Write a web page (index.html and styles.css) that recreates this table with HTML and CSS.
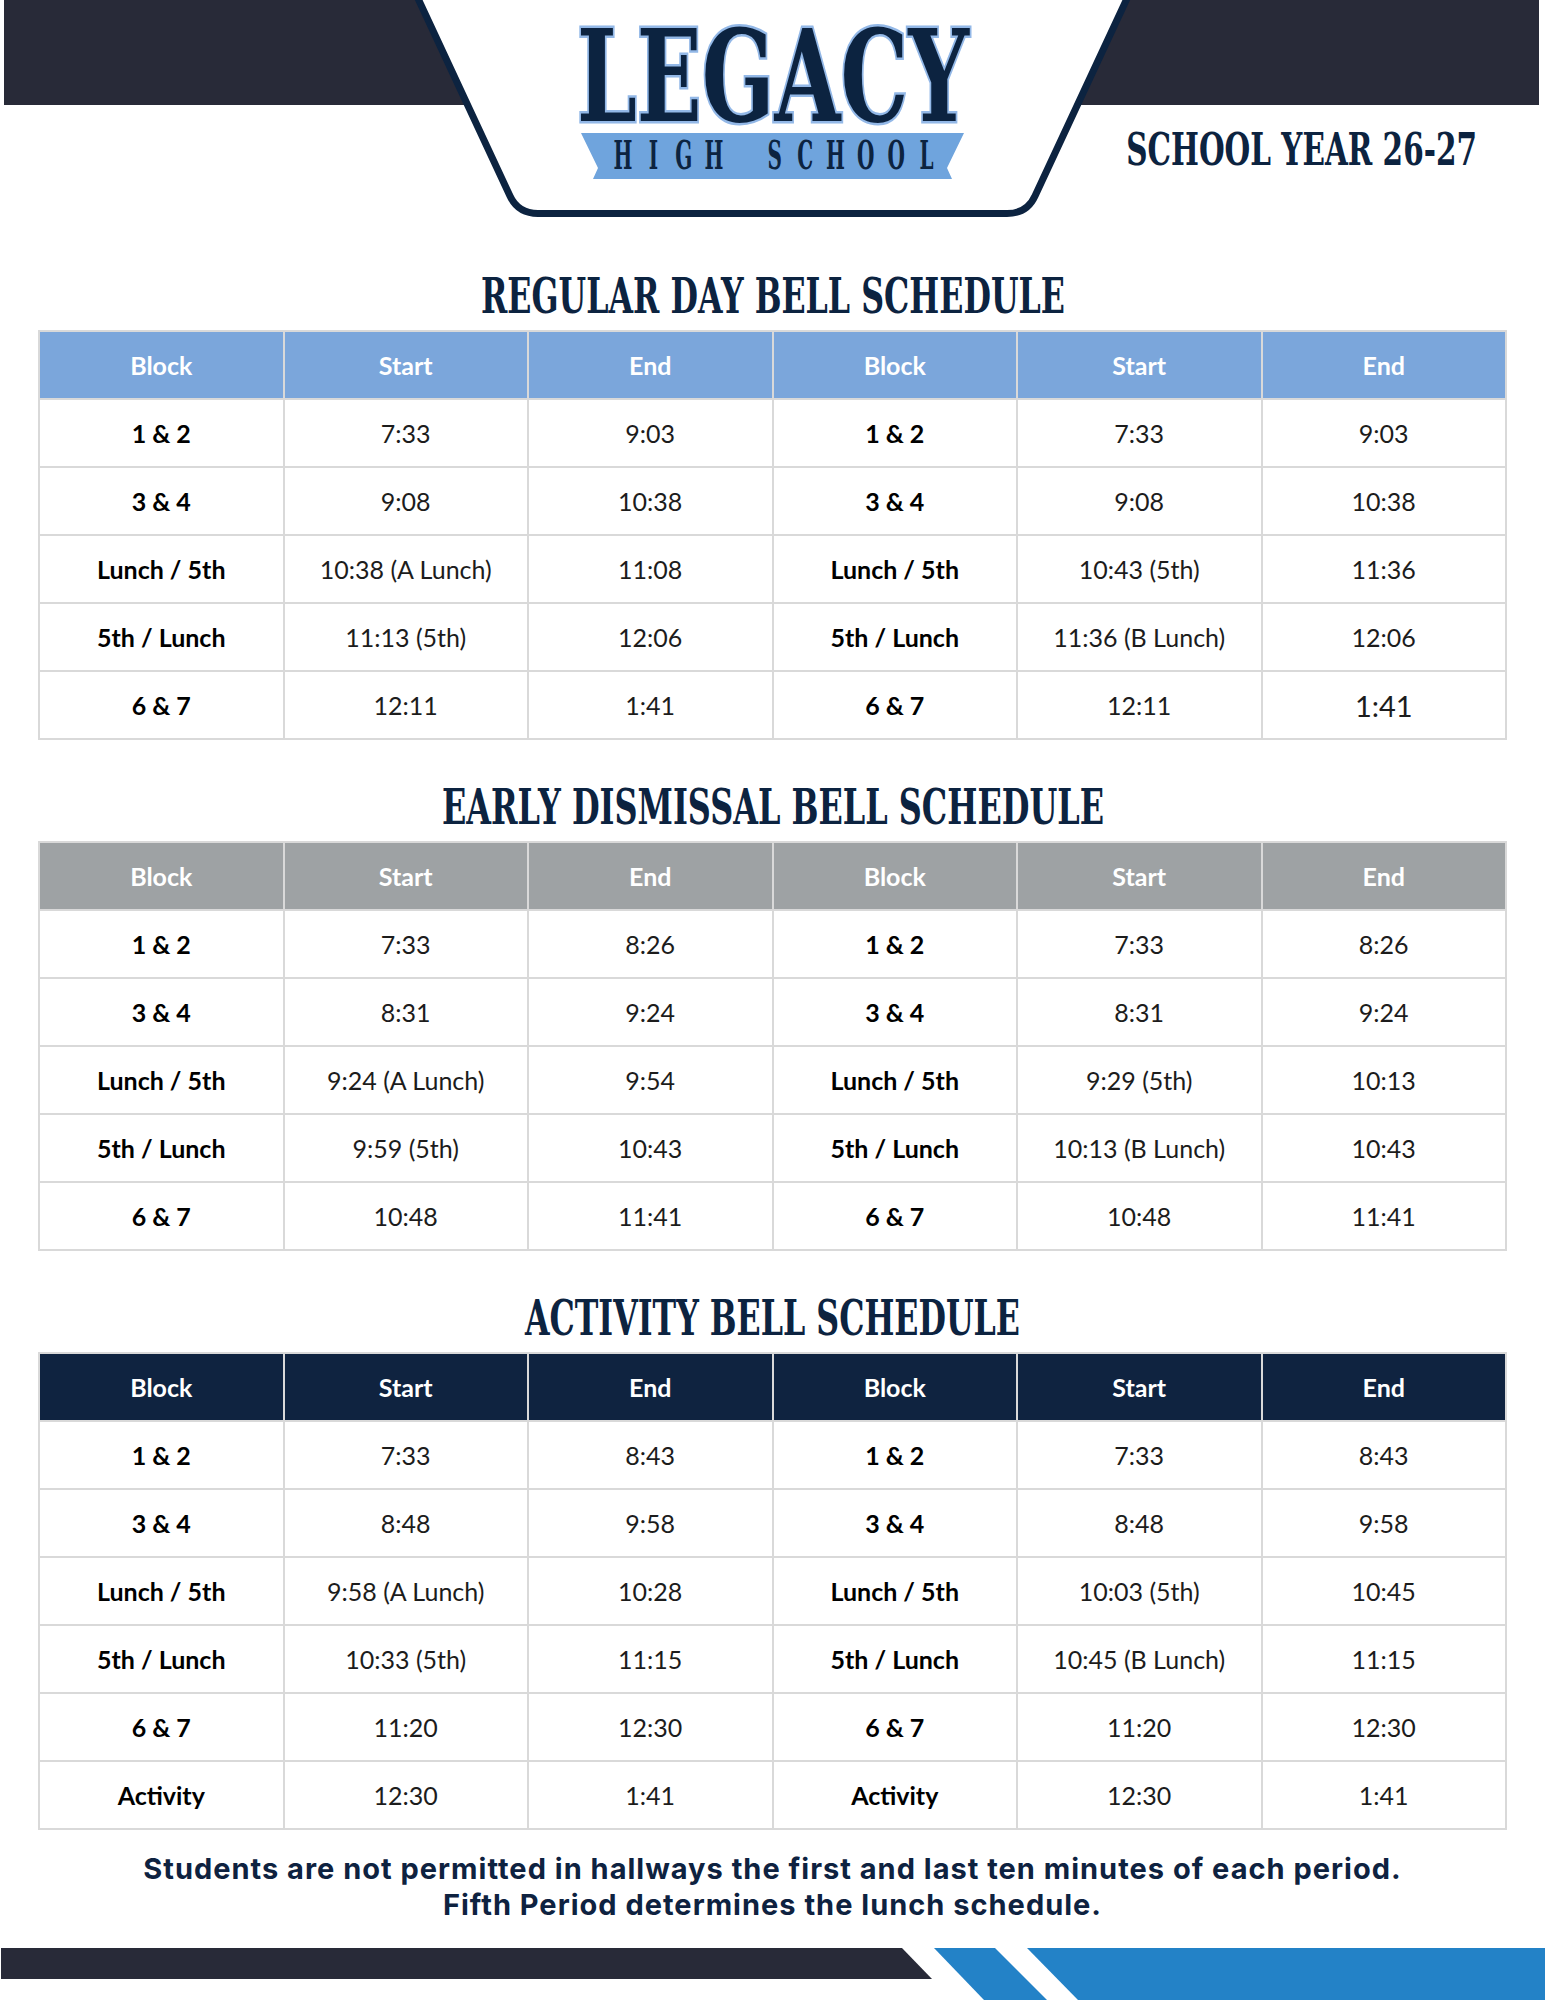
FILE: index.html
```html
<!DOCTYPE html>
<html lang="en">
<head>
<meta charset="utf-8">
<title>Legacy High School – Bell Schedules 26-27</title>
<link rel="stylesheet" href="styles.css">
</head>
<body>
<div class="page">
  <header class="masthead">
    <svg class="masthead-bg" width="1545" height="217" viewBox="0 0 1545 217" aria-hidden="true">
      <rect x="4" y="0" width="1535" height="105" fill="#282a38"/>
      <path d="M415 -8 L510 196 Q518 213.5 538 213.5 L1007 213.5 Q1027 213.5 1035 196 L1130 -8 Z" fill="#ffffff" stroke="#0c2340" stroke-width="7"/>
    </svg>
    <div class="logo">
      <svg class="logo-svg" width="400" height="180" viewBox="0 0 400 180">
        <polygon points="8,133 391,133 374,168 379,179 20,179 25,168" fill="#6fa4dd"/>
        <text class="legacy-text" x="200" y="121" text-anchor="middle" textLength="392" lengthAdjust="spacingAndGlyphs">LEGACY</text>
        <text class="ribbon-text" transform="translate(8 0) scale(0.5 1)" y="169" x="84 144.7 205.4 266.1 326.8 387.5 448.2 508.9 569.6 630.3 691" text-anchor="middle">HIGH SCHOOL</text>
      </svg>
    </div>
    <div class="year">
      <svg class="year-svg" width="352" height="54" viewBox="0 0 352 54">
        <text class="slab" transform="translate(351 42) scale(0.656 1)" x="0" y="0" text-anchor="end">SCHOOL YEAR 26-27</text>
      </svg>
    </div>
  </header>

  <main class="content">
    <section class="schedule schedule--first">
      <h2 class="section-title">
        <svg width="586" height="60" viewBox="0 0 586 60"><text class="slab title-text" x="1" y="46" textLength="584" lengthAdjust="spacingAndGlyphs">REGULAR DAY BELL SCHEDULE</text></svg>
      </h2>
      <table class="sched sched--blue">
        <thead>
          <tr><th>Block</th><th>Start</th><th>End</th><th>Block</th><th>Start</th><th>End</th></tr>
        </thead>
        <tbody>
          <tr><td class="lbl">1 &amp; 2</td><td>7:33</td><td>9:03</td><td class="lbl">1 &amp; 2</td><td>7:33</td><td>9:03</td></tr>
          <tr><td class="lbl">3 &amp; 4</td><td>9:08</td><td>10:38</td><td class="lbl">3 &amp; 4</td><td>9:08</td><td>10:38</td></tr>
          <tr><td class="lbl">Lunch / 5th</td><td>10:38 (A Lunch)</td><td>11:08</td><td class="lbl">Lunch / 5th</td><td>10:43 (5th)</td><td>11:36</td></tr>
          <tr><td class="lbl">5th / Lunch</td><td>11:13 (5th)</td><td>12:06</td><td class="lbl">5th / Lunch</td><td>11:36 (B Lunch)</td><td>12:06</td></tr>
          <tr><td class="lbl">6 &amp; 7</td><td>12:11</td><td>1:41</td><td class="lbl">6 &amp; 7</td><td>12:11</td><td class="big">1:41</td></tr>
        </tbody>
      </table>
    </section>

    <section class="schedule">
      <h2 class="section-title">
        <svg width="664" height="60" viewBox="0 0 664 60"><text class="slab title-text" x="1" y="46" textLength="662" lengthAdjust="spacingAndGlyphs">EARLY DISMISSAL BELL SCHEDULE</text></svg>
      </h2>
      <table class="sched sched--gray">
        <thead>
          <tr><th>Block</th><th>Start</th><th>End</th><th>Block</th><th>Start</th><th>End</th></tr>
        </thead>
        <tbody>
          <tr><td class="lbl">1 &amp; 2</td><td>7:33</td><td>8:26</td><td class="lbl">1 &amp; 2</td><td>7:33</td><td>8:26</td></tr>
          <tr><td class="lbl">3 &amp; 4</td><td>8:31</td><td>9:24</td><td class="lbl">3 &amp; 4</td><td>8:31</td><td>9:24</td></tr>
          <tr><td class="lbl">Lunch / 5th</td><td>9:24 (A Lunch)</td><td>9:54</td><td class="lbl">Lunch / 5th</td><td>9:29 (5th)</td><td>10:13</td></tr>
          <tr><td class="lbl">5th / Lunch</td><td>9:59 (5th)</td><td>10:43</td><td class="lbl">5th / Lunch</td><td>10:13 (B Lunch)</td><td>10:43</td></tr>
          <tr><td class="lbl">6 &amp; 7</td><td>10:48</td><td>11:41</td><td class="lbl">6 &amp; 7</td><td>10:48</td><td>11:41</td></tr>
        </tbody>
      </table>
    </section>

    <section class="schedule">
      <h2 class="section-title">
        <svg width="497" height="60" viewBox="0 0 497 60"><text class="slab title-text" x="1" y="46" textLength="495" lengthAdjust="spacingAndGlyphs">ACTIVITY BELL SCHEDULE</text></svg>
      </h2>
      <table class="sched sched--navy">
        <thead>
          <tr><th>Block</th><th>Start</th><th>End</th><th>Block</th><th>Start</th><th>End</th></tr>
        </thead>
        <tbody>
          <tr><td class="lbl">1 &amp; 2</td><td>7:33</td><td>8:43</td><td class="lbl">1 &amp; 2</td><td>7:33</td><td>8:43</td></tr>
          <tr><td class="lbl">3 &amp; 4</td><td>8:48</td><td>9:58</td><td class="lbl">3 &amp; 4</td><td>8:48</td><td>9:58</td></tr>
          <tr><td class="lbl">Lunch / 5th</td><td>9:58 (A Lunch)</td><td>10:28</td><td class="lbl">Lunch / 5th</td><td>10:03 (5th)</td><td>10:45</td></tr>
          <tr><td class="lbl">5th / Lunch</td><td>10:33 (5th)</td><td>11:15</td><td class="lbl">5th / Lunch</td><td>10:45 (B Lunch)</td><td>11:15</td></tr>
          <tr><td class="lbl">6 &amp; 7</td><td>11:20</td><td>12:30</td><td class="lbl">6 &amp; 7</td><td>11:20</td><td>12:30</td></tr>
          <tr><td class="lbl">Activity</td><td>12:30</td><td>1:41</td><td class="lbl">Activity</td><td>12:30</td><td>1:41</td></tr>
        </tbody>
      </table>
    </section>

    <p class="note">Students are not permitted in hallways the first and last ten minutes of each period.<br>Fifth Period determines the lunch schedule.</p>
  </main>

  <footer class="footer-stripe">
    <svg width="1545" height="52" viewBox="0 0 1545 52" aria-hidden="true">
      <polygon points="1,0 902,0 932,31 1,31" fill="#282a38"/>
      <polygon points="934,0 995,0 1047,52 984,52" fill="#2382c7"/>
      <polygon points="1027,0 1545,0 1545,52 1078,52" fill="#2382c7"/>
    </svg>
  </footer>
</div>
</body>
</html>
```

FILE: styles.css
```css
html, body {
  margin: 0;
  padding: 0;
  background: #ffffff;
}

.page {
  width: 1545px;
  font-family: "Lato", "Open Sans", sans-serif;
}

/* ---------- masthead ---------- */
.masthead {
  position: relative;
  height: 217px;
  display: grid;
  grid-template-columns: 1fr 400px 1fr;
}

.masthead-bg {
  position: absolute;
  left: 0;
  top: 0;
  z-index: 0;
  display: block;
}

.logo {
  position: relative;
  z-index: 1;
  grid-column: 2;
  display: flex;
  justify-content: center;
}

.logo-svg {
  display: block;
  overflow: visible;
}

.legacy-text {
  font-family: "DejaVu Serif", serif;
  font-weight: 700;
  font-size: 128px;
  fill: #0c2340;
  stroke: #93b8e7;
  stroke-width: 5px;
  paint-order: stroke;
  stroke-linejoin: miter;
}

.ribbon-text {
  font-family: "DejaVu Serif", serif;
  font-weight: 700;
  font-size: 40px;
  fill: #0c2340;
}

.year {
  position: relative;
  z-index: 1;
  grid-column: 3;
  justify-self: end;
  padding-top: 123px;
  padding-right: 67px;
}

.year-svg {
  display: block;
  overflow: visible;
}

.slab {
  font-family: "DejaVu Serif", serif;
  font-weight: 700;
  font-size: 45px;
  fill: #0c2340;
}

.title-text {
  font-size: 49px;
}

/* ---------- schedules ---------- */
.content {
  padding: 0 38px;
}

.section-title {
  margin: 38px 0 3px;
  display: flex;
  justify-content: center;
  line-height: 0;
}

.section-title svg {
  display: block;
  overflow: visible;
}

.schedule--first .section-title {
  margin-top: 50px;
}

.sched {
  width: 1469px;
  border-collapse: collapse;
  table-layout: fixed;
}

.sched th,
.sched td {
  border: 2px solid #d9d9d9;
  height: 66px;
  padding: 0;
  text-align: center;
  vertical-align: middle;
  font-size: 25px;
}

.sched th {
  color: #ffffff;
  font-weight: 700;
}

.sched td {
  color: #1c1c1c;
  font-weight: 400;
}

.sched td.lbl {
  color: #000000;
  font-weight: 700;
}

.sched td.big {
  font-size: 29px;
}

.sched--blue th { background: #7ba6db; }
.sched--gray th { background: #9ea2a4; }
.sched--navy th { background: #0f2340; }

/* ---------- note & footer ---------- */
.note {
  margin: 21px 0 0;
  text-align: center;
  font-family: "Inter", "Open Sans", sans-serif;
  font-weight: 700;
  font-size: 29px;
  line-height: 36px;
  letter-spacing: 1px;
  color: #0e2240;
}

.footer-stripe {
  margin-top: 25px;
  line-height: 0;
}

.footer-stripe svg {
  display: block;
}
```
